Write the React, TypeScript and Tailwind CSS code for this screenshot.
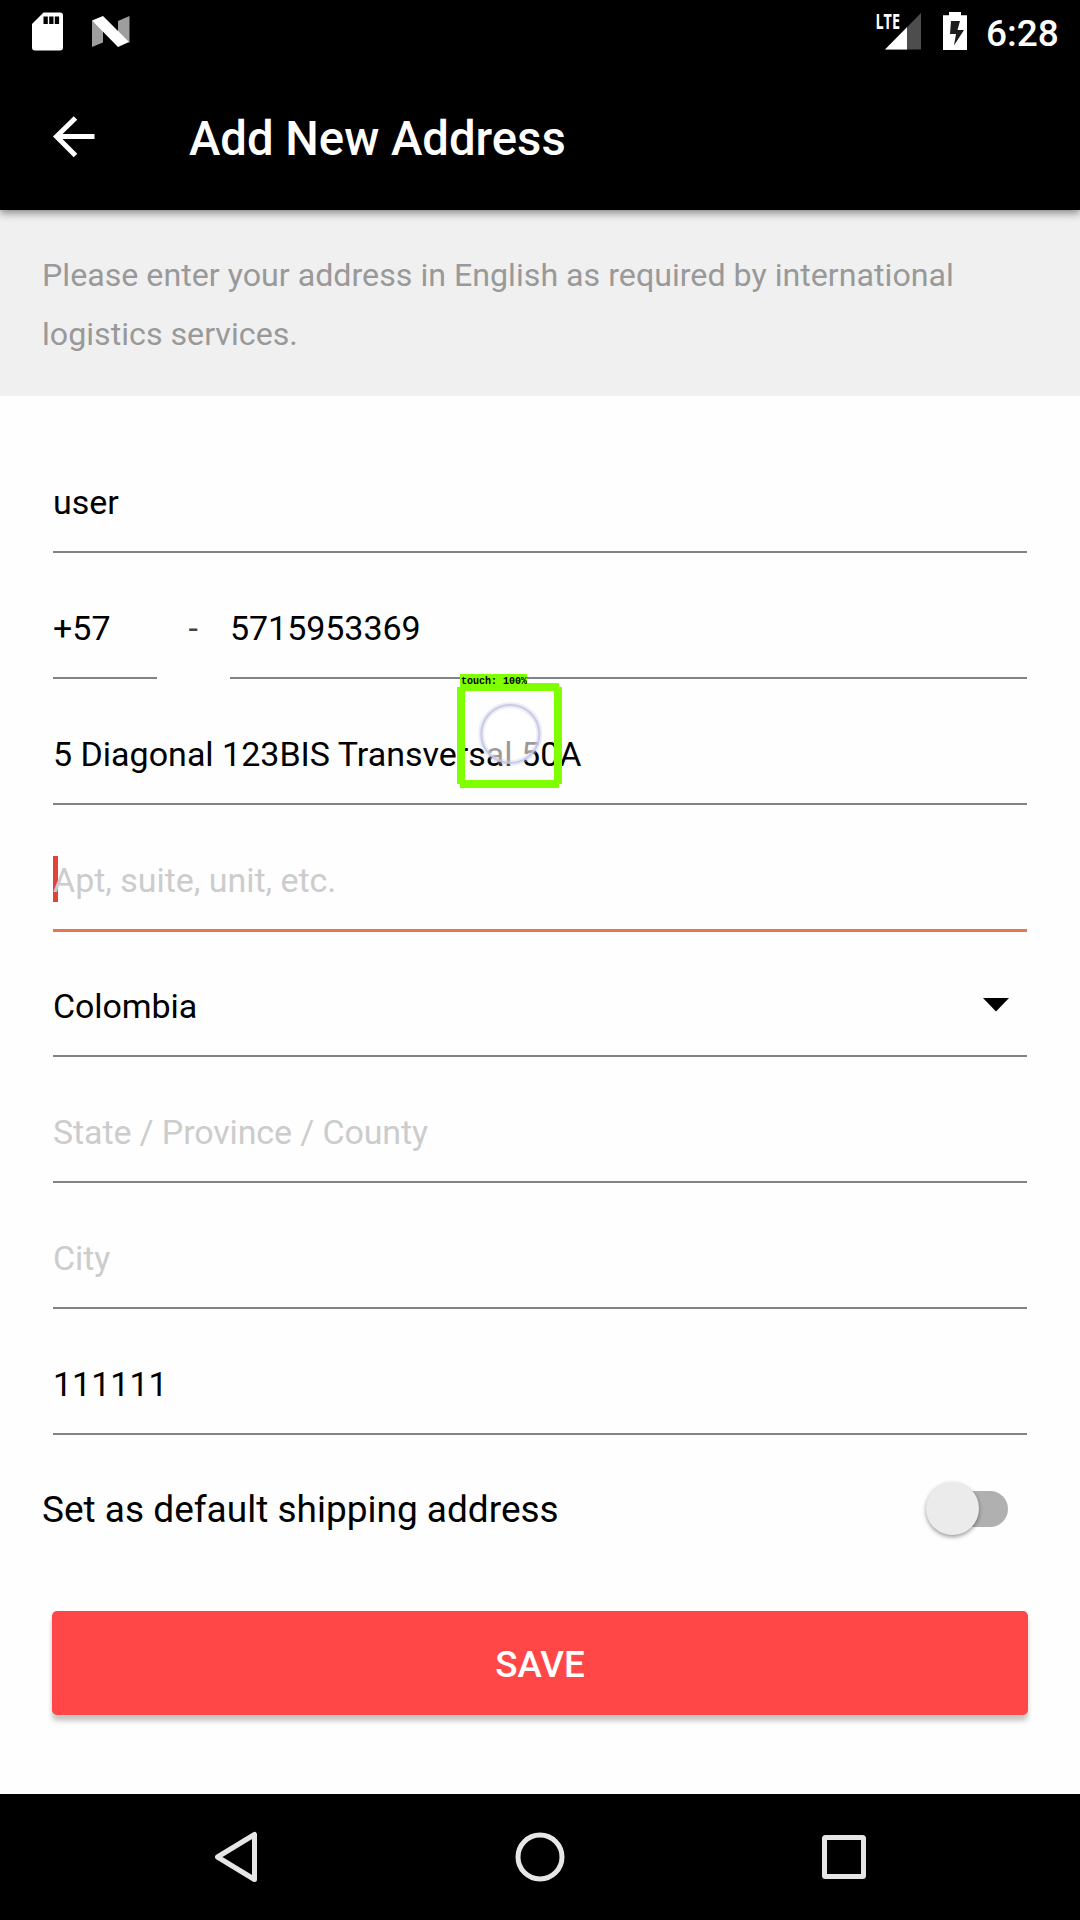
import React from "react";

function StatusBar() {
  return (
    <div className="flex h-[63px] items-start justify-between bg-black">
      <svg width="160" height="63" viewBox="0 0 160 63">
        <path d="M43.500 12.500H60q3 0 3 3V47.500q0 3-3 3H35q-3 0-3-3V24Z" fill="#fff" />
        <path d="M43.500 16.500h4.300v7.500h-4.300zM49.200 16.500h4.300v7.500h-4.300zM54.800 16.500h4.300v7.500h-4.300z" fill="#000" />
        <path d="M92 20.500 103 28V42.500L92 47ZM118 21 129.500 16V43L118 33Z" fill="#9e9e9e" />
        <path d="M92 20.500 103 16 129 42 118 47Z" fill="#fff" />
      </svg>
      <div className="flex">
        <svg width="104" height="63" viewBox="0 0 104 63" fontFamily="Open Sans">
          <path d="M57 13V49.500H21Z" fill="#4d4d4d" />
          <path d="M43 27.200V49.500H21Z" fill="#fff" />
          <path d="M12 10H38.500V27L34 32H12Z" fill="#000" />
          <text x="11.500" y="29" fontSize="22" fontWeight="700" fill="#fff" textLength="24.500" lengthAdjust="spacingAndGlyphs">LTE</text>
          <path d="M79 15.200h6V12h12v3.200h6V50H79Z" fill="#fff" />
          <path d="M87 21H96L93.500 30H100L90 45.500 92 34H86Z" fill="#1c1c1c" />
        </svg>
        <div className="w-[112px] pl-[18px] pt-[5px] text-[37px] leading-[58px] font-medium text-white">6:28</div>
      </div>
    </div>
  );
}

function Field({ value, placeholder, className = "" }: { value?: string; placeholder?: string; className?: string }) {
  return (
    <div className={"h-[126px] border-b-2 border-[#838383] pt-[45px] " + className}>
      {value ? <span className="text-black">{value}</span> : <span className="tracking-[-0.13px] text-[#cccccc]">{placeholder}</span>}
    </div>
  );
}

function TouchMarker() {
  return (
    <div className="absolute top-[247px] left-[404px]">
      <svg width="106" height="116" viewBox="457 674 106 116" fontFamily="Liberation Mono">
        <circle cx="510.300" cy="734" r="29" fill="#fff" fillOpacity="0.6" stroke="#c9cae6" strokeOpacity="0.35" strokeWidth="6" />
        <circle cx="510.300" cy="734" r="29" fill="none" stroke="#c4c5e4" strokeOpacity="0.85" strokeWidth="2.200" />
        <path fillRule="evenodd" d="M460 683H559V687H562V784H559V788H460V784H457V687H460ZM465 691V780H554V691Z" fill="#7fff00" />
        <rect x="460" y="674" width="67" height="17" fill="#7fff00" />
        <text x="461" y="684" fontSize="10" fontWeight="700" fill="#000">touch: 100%</text>
      </svg>
    </div>
  );
}

export default function App() {
  return (
    <div className="flex h-[1920px] w-[1080px] flex-col overflow-hidden bg-[#fefefe] font-['Roboto',sans-serif]">
      <header className="relative h-[210px] bg-black shadow-[0_3px_8px_rgba(0,0,0,0.45)]">
        <StatusBar />
        <div className="flex h-[147px] items-center">
          <svg width="189" height="147" viewBox="0 0 189 147" fill="none" stroke="#fff" strokeWidth="5">
            <path d="M94.500 73.500H57M75.500 55 56.500 73.500 75.500 92.500" />
          </svg>
          <h1 className="pt-[5px] text-[47.25px] leading-[56px] font-medium text-white">Add New Address</h1>
        </div>
      </header>
      <p className="h-[186px] bg-[#f0f0f0] px-[42px] pt-[36px] text-[32.200px] leading-[59px] text-[#999999]">
        Please enter your address in English as required by international logistics services.
      </p>
      <main className="mt-[31px] px-[53px] text-[34px] leading-[60px]">
        <Field value="user" />
        <div className="relative">
          <div className="flex">
            <Field value="+57" className="w-[104px]" />
            <span className="w-[73px] pt-[45px] pl-[31.500px] text-[#444]">-</span>
            <Field value="5715953369" className="flex-1 tracking-[-0.05px]" />
          </div>
          <Field value="5 Diagonal 123BIS Transversal 50A" />
          <div className="absolute top-[-126px] left-0">
            <TouchMarker />
          </div>
        </div>
        <div className="relative h-[127px] border-b-[3px] border-[#e57650] pt-[45px]">
          <div className="absolute top-[51px] left-0 h-[46px] w-[5px] bg-[#e04438]" />
          <span className="relative tracking-[-0.05px] text-[#cccccc]">Apt, suite, unit, etc.</span>
        </div>
        <div className="flex h-[125px] justify-between border-b-2 border-[#838383] pt-[44px]">
          <span className="tracking-[-0.1px]">Colombia</span>
          <svg className="mt-[22px] mr-[18px]" width="26" height="14" viewBox="0 0 26 14">
            <path d="M0 0H26L13 13.500Z" />
          </svg>
        </div>
        <Field placeholder="State / Province / County" />
        <Field placeholder="City" />
        <Field value="111111" />
      </main>
      <div className="flex h-[150px] items-center justify-between pr-[72.500px] pl-[42px] text-[37px] text-black">
        <span>Set as default shipping address</span>
        <div className="relative mb-[3px] h-[36px] w-[70px] rounded-full bg-[#b0b0b0]">
          <div className="absolute top-[-9px] left-[-12px] h-[53px] w-[53px] rounded-full bg-[#ebebeb] shadow-[0_2px_4px_rgba(0,0,0,0.4)]" />
        </div>
      </div>
      <button className="mx-[52px] mt-[26px] h-[104px] rounded-[5px] bg-[#ff4747] pt-[4px] text-[36.75px] font-medium text-white shadow-[0_6px_5px_rgba(0,0,0,0.22)]">
        SAVE
      </button>
      <nav className="mt-auto h-[126px] bg-black">
        <svg width="1080" height="126" viewBox="0 1794 1080 126" fill="none" stroke="#e6e6e6" strokeWidth="5" strokeLinejoin="round">
          <path d="M254.500 1834.500V1879.500L217.500 1857Z" />
          <circle cx="540" cy="1857" r="22" />
          <rect x="824.500" y="1837.500" width="39" height="39" rx="1" />
        </svg>
      </nav>
    </div>
  );
}
